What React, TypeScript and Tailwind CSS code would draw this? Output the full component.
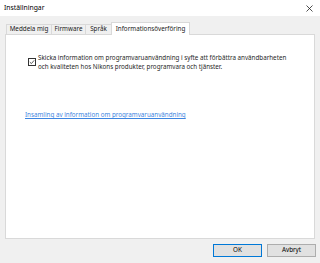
import React from "react";

const font = { fontFamily: '"Noto Sans", "Open Sans", sans-serif' };

const Tab = ({ label, width }: { label: string; width: string }) => (
  <div
    className={`${width} h-[10px] flex items-center justify-center border border-b-0 border-[#d9d9d9] bg-[#f0f0f0] -mr-px text-[6.3px] text-[#1a1a1a] leading-none`}
  >
    {label}
  </div>
);

export default function App() {
  return (
    <div className="w-[320px] h-[263px] bg-[#f0f0f0] flex flex-col overflow-hidden" style={font}>
      {/* title bar */}
      <div className="h-[16px] bg-white flex items-center justify-between pl-[4px] pr-[6px]">
        <span className="text-[6.8px] text-black leading-none">Inställningar</span>
        <svg width="7" height="7" viewBox="0 0 7 7" className="mr-[1px]">
          <path d="M0.5 0.5 L6.5 6.5 M6.5 0.5 L0.5 6.5" stroke="#222" strokeWidth="0.8" />
        </svg>
      </div>

      {/* tabs */}
      <div className="flex items-end pl-[6px] mt-[6px] h-[12px]">
        <Tab label="Meddela mig" width="w-[46px]" />
        <Tab label="Firmware" width="w-[35px]" />
        <Tab label="Språk" width="w-[27px]" />
        <div className="w-[79px] h-[13px] -mb-px relative z-10 flex items-center justify-center border border-b-0 border-[#d9d9d9] bg-white text-[6.3px] text-[#1a1a1a] leading-none">
          Informationsöverföring
        </div>
      </div>

      {/* panel */}
      <div className="ml-[5px] w-[310px] h-[205px] bg-white border border-[#d9d9d9]">
        <div className="flex items-start pl-[22px] pt-[18px] pr-[18px]">
          <div className="w-[8px] h-[8px] mt-[5px] mr-[1px] border border-[#333] flex items-center justify-center shrink-0">
            <svg width="6" height="6" viewBox="0 0 6 6">
              <path d="M0.8 3.1 L2.4 4.6 L5.2 1.3" stroke="#333" strokeWidth="0.8" fill="none" />
            </svg>
          </div>
          <p className="ml-[1px] text-[6.25px] leading-[9px] text-[#262626]">
            Skicka information om programvaruanvändning i syfte att förbättra användbarheten
            och kvaliteten hos Nikons produkter, programvara och tjänster.
          </p>
        </div>
        <div className="pl-[19px] mt-[28px]">
          <span className="text-[6.25px] leading-none text-[#3d85e0] underline">
            Insamling av information om programvaruanvändning
          </span>
        </div>
      </div>

      {/* buttons */}
      <div className="flex justify-end gap-[5px] pr-[4px] mt-[5px]">
        <button className="w-[49px] h-[13px] bg-[#e1e1e1] border border-[#0078d7] text-[6.3px] text-black leading-none">
          OK
        </button>
        <button className="w-[49px] h-[13px] bg-[#e1e1e1] border border-[#adadad] text-[6.3px] text-black leading-none">
          Avbryt
        </button>
      </div>
    </div>
  );
}
